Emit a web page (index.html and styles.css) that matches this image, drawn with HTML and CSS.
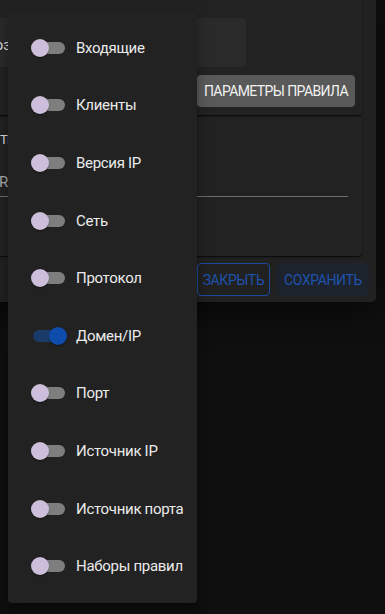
FILE: index.html
```html
<!DOCTYPE html>
<html lang="ru">
<head>
<meta charset="utf-8">
<link rel="stylesheet" href="styles.css">
</head>
<body>
<div class="page">
  <div class="dialog">
    <div class="card card-top">
      <div class="field"><span class="field-value">Создать правило</span></div>
      <div class="card-row"><button class="btn-params">Параметры правила</button></div>
    </div>
    <div class="card card-bottom">
      <div class="section-title">Тип правила</div>
      <div class="select"><span class="select-value">ROUTE</span></div>
    </div>
    <div class="actions">
      <button class="btn-outline">Закрыть</button>
      <button class="btn-save">Сохранить</button>
    </div>
  </div>

  <ul class="menu">
    <li class="menu-item"><span class="switch"><span class="track"></span><span class="thumb"></span></span><span class="label">Входящие</span></li>
    <li class="menu-item"><span class="switch"><span class="track"></span><span class="thumb"></span></span><span class="label">Клиенты</span></li>
    <li class="menu-item"><span class="switch"><span class="track"></span><span class="thumb"></span></span><span class="label">Версия IP</span></li>
    <li class="menu-item"><span class="switch"><span class="track"></span><span class="thumb"></span></span><span class="label">Сеть</span></li>
    <li class="menu-item"><span class="switch"><span class="track"></span><span class="thumb"></span></span><span class="label">Протокол</span></li>
    <li class="menu-item"><span class="switch on"><span class="track"></span><span class="thumb"></span></span><span class="label">Домен/IP</span></li>
    <li class="menu-item"><span class="switch"><span class="track"></span><span class="thumb"></span></span><span class="label">Порт</span></li>
    <li class="menu-item"><span class="switch"><span class="track"></span><span class="thumb"></span></span><span class="label">Источник IP</span></li>
    <li class="menu-item"><span class="switch"><span class="track"></span><span class="thumb"></span></span><span class="label">Источник порта</span></li>
    <li class="menu-item"><span class="switch"><span class="track"></span><span class="thumb"></span></span><span class="label">Наборы правил</span></li>
  </ul>
</div>
</body>
</html>
```

FILE: styles.css
```css
* { box-sizing: border-box; }

html, body {
  margin: 0;
  padding: 0;
  background: #0f0f0f;
  width: 385px;
  height: 614px;
  overflow: hidden;
  font-family: Roboto, "Noto Sans", sans-serif;
}

.page {
  position: relative;
  width: 385px;
  height: 614px;
  overflow: hidden;
}

/* ---------- dialog behind ---------- */
.dialog {
  margin-left: -54px;
  margin-top: -10px;
  width: 430px;
  height: 312px;
  background: #212121;
  border-radius: 0 0 5px 5px;
  padding: 8px 14px 6px 14px;
  display: flex;
  flex-direction: column;
  box-shadow: 0 10px 30px rgba(0,0,0,0.5);
}

.card {
  background: #222222;
  border-radius: 4px;
  box-shadow: 0 2px 1px -1px rgba(0,0,0,0.35), 0 1px 1px rgba(0,0,0,0.3), 0 1px 3px rgba(0,0,0,0.25);
}

.card-top {
  height: 117px;
  padding: 20px 7px 8px 8px;
  display: flex;
  flex-direction: column;
  gap: 8px;
}

.field {
  width: 278px;
  height: 49px;
  background: #2a2a2a;
  border-radius: 4px;
  padding-left: 17px;
  display: flex;
  align-items: center;
  padding-top: 4px;
}

.field-value {
  color: #d8d8d8;
  font-size: 15px;
  white-space: nowrap;
}

.card-row {
  display: flex;
  justify-content: flex-end;
}

.btn-params {
  height: 32px;
  width: 158px;
  padding: 0;
  border: 0;
  border-radius: 4px;
  background: #595959;
  color: #f2f2f2;
  font-family: Roboto, "Noto Sans", sans-serif;
  font-size: 14px;
  text-transform: uppercase;
  letter-spacing: -0.6px;
  white-space: nowrap;
}

.card-bottom {
  margin-top: 2px;
  height: 139px;
  padding: 16px 14px 0 22px;
  display: flex;
  flex-direction: column;
}

.section-title {
  color: #d6d6d6;
  font-size: 13px;
  height: 14px;
  line-height: 14px;
  white-space: nowrap;
  margin-left: 18px;
}

.select {
  margin-top: 20px;
  height: 30px;
  border-bottom: 1px solid #6b6b6b;
  display: flex;
  align-items: center;
}

.select-value {
  color: #a9a9a9;
  font-size: 15px;
  white-space: nowrap;
  margin-left: 17px;
}

.actions {
  margin-top: 7px;
  margin-right: -14px;
  display: flex;
  justify-content: flex-end;
  gap: 7px;
  padding-right: 7px;
}

.btn-outline, .btn-save {
  height: 33px;
  border-radius: 4px;
  font-family: Roboto, "Noto Sans", sans-serif;
  font-size: 14px;
  text-transform: uppercase;
  color: #1d52ad;
  letter-spacing: -0.4px;
  padding: 0;
  white-space: nowrap;
}

.btn-outline {
  width: 73px;
  background: transparent;
  border: 1px solid #1a4b9c;
}

.btn-save {
  width: 92px;
  background: #1d232d;
  border: 0;
}

/* ---------- popover menu ---------- */
.menu {
  position: absolute;
  left: 8px;
  top: 11px;
  width: 189px;
  margin: 0;
  padding: 8px 0;
  list-style: none;
  background: #222222;
  border-radius: 4px;
  box-shadow: 0 5px 5px -3px rgba(0,0,0,0.2), 0 8px 10px 1px rgba(0,0,0,0.14), 0 3px 14px 2px rgba(0,0,0,0.12);
}

.menu-item {
  height: 57.6px;
  display: flex;
  align-items: center;
  padding-left: 23px;
}

.switch {
  position: relative;
  width: 36px;
  height: 18px;
  flex: none;
}

.track {
  position: absolute;
  left: 2px;
  top: 3px;
  width: 32px;
  height: 12px;
  border-radius: 6px;
  background: #7e7e7e;
}

.thumb {
  position: absolute;
  left: 0;
  top: 0;
  width: 18px;
  height: 18px;
  border-radius: 50%;
  background: #cdbfdb;
  box-shadow: 0 2px 1px -1px rgba(0,0,0,0.2), 0 1px 1px rgba(0,0,0,0.14), 0 1px 3px rgba(0,0,0,0.12);
}

.switch.on .track {
  background: #1a3a69;
}

.switch.on .thumb {
  left: 18px;
  background: #0d4cab;
}

.label {
  margin-left: 9px;
  color: #ebebeb;
  font-size: 15px;
  letter-spacing: -0.3px;
  white-space: nowrap;
}
```
